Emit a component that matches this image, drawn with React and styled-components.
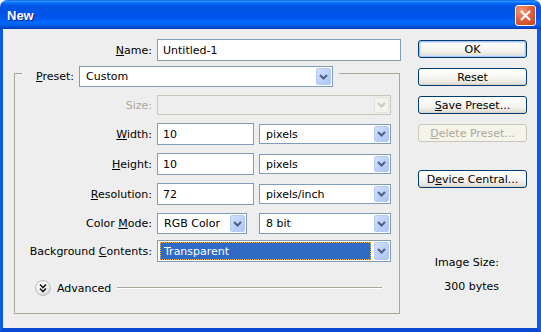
import React from "react";
import styled, { createGlobalStyle } from "styled-components";

const GlobalStyle = createGlobalStyle`
    html, body {
        margin: 0;
        padding: 0;
        background: #ffffff;
    }
    body {
        font-family: "DejaVu Sans", Verdana, sans-serif;
        font-size: 11px;
        color: #000;
    }
`;

const Window = styled.div`
    width: 541px;
    height: 332px;
    display: flex;
    flex-direction: column;
`;

const TitleBar = styled.div`
    height: 29px;
    flex: none;
    box-sizing: border-box;
    display: flex;
    align-items: center;
    justify-content: space-between;
    padding: 2px 5px 0 7px;
    border-radius: 7px 7px 0 0;
    background: linear-gradient(
        to bottom,
        #0058ee 0%,
        #3593ff 4%,
        #288eff 6%,
        #127dff 8%,
        #036ffc 10%,
        #0262ee 14%,
        #0057e5 20%,
        #0054e3 24%,
        #0055eb 56%,
        #005bf5 66%,
        #026afe 76%,
        #0062ef 86%,
        #0052d6 92%,
        #0046c4 96%,
        #003fb8 100%
    );
`;

const Title = styled.span`
    color: #fff;
    font-family: "Liberation Sans", Arial, sans-serif;
    font-weight: bold;
    font-size: 13px;
    text-shadow: 1px 1px 0 #0a1883;
`;

const CloseButton = styled.div`
    width: 21px;
    height: 21px;
    box-sizing: border-box;
    border: 1px solid #fff;
    border-radius: 3px;
    background: radial-gradient(circle at 30% 25%, #f29d80 0%, #e2623c 45%, #c8421c 100%);
    display: flex;
    align-items: center;
    justify-content: center;
`;

const Client = styled.div`
    flex: 1;
    display: flex;
    background: #eeeeee;
    border-left: 3px solid #0b5be6;
    border-right: 4px solid #0b5be6;
    border-bottom: 4px solid #0a48d2;
    padding: 10px 10px 0 11px;
`;

const FormColumn = styled.div`
    width: 387px;
    display: flex;
    flex-direction: column;
`;

const NameRow = styled.div`
    display: grid;
    grid-template-columns: 138px 244px;
    column-gap: 5px;
    align-items: center;
`;

const Label = styled.span`
    text-align: right;
    white-space: nowrap;
    color: ${(p) => (p.$disabled ? "#aca899" : "#000")};
`;

const Key = styled.u`
    text-decoration: underline;
    text-underline-offset: 1px;
`;

const TextInput = styled.input`
    box-sizing: border-box;
    width: ${(p) => p.$width}px;
    height: 22px;
    margin: 0;
    padding: 0 0 0 5px;
    border: 1px solid #7f9db9;
    background: #fff;
    font-family: "DejaVu Sans", Verdana, sans-serif;
    font-size: 11px;
    color: #000;
    outline: none;
`;

const SelectBox = styled.div`
    box-sizing: border-box;
    display: flex;
    width: ${(p) => (p.$width ? `${p.$width}px` : "100%")};
    height: ${(p) => p.$height || 21}px;
    border: 1px solid ${(p) => (p.$disabled ? "#c9c7ba" : "#7f9db9")};
    background: ${(p) => (p.$disabled ? "#eeeeee" : "#fff")};
`;

const SelectValue = styled.div`
    flex: 1;
    display: flex;
    align-items: center;
    padding-left: 6px;
    white-space: nowrap;
    overflow: hidden;
`;

const SelectedValue = styled.div`
    flex: 1;
    display: flex;
    align-items: center;
    margin: 1px 2px 1px 2px;
    padding-left: 4px;
    background: #316ac5;
    color: #fff;
    outline: 1px dotted #e8b84a;
    outline-offset: -1px;
`;

const ArrowBox = styled.div`
    width: 15px;
    margin: 1px;
    box-sizing: border-box;
    border-radius: 2px;
    border: 1px solid ${(p) => (p.$disabled ? "#e4e3dc" : "#b7caf5")};
    background: ${(p) =>
        p.$disabled
            ? "#f3f3f0"
            : "linear-gradient(135deg, #d6e2fd 0%, #bed1fa 50%, #adc4f4 100%)"};
    display: flex;
    align-items: center;
    justify-content: center;
`;

const Group = styled.fieldset`
    margin: -2px 0 0 0;
    width: 386px;
    min-width: 0;
    box-sizing: border-box;
    padding: 8px 8px 17px 0;
    border: 1px solid #aca899;
    border-radius: 0;
`;

const Legend = styled.legend`
    margin-left: 7px;
    padding: 7px 6px 0 14px;
`;

const LegendInner = styled.div`
    display: flex;
    align-items: center;
    gap: 5px;
`;

const FieldRow = styled.div`
    display: grid;
    grid-template-columns: 137px 234px;
    column-gap: 5px;
    align-items: center;
    margin-top: ${(p) => (p.$mt === undefined ? 8 : p.$mt)}px;
`;

const Controls = styled.div`
    display: flex;
    align-items: center;
    justify-content: space-between;
`;

const AdvancedRow = styled.div`
    display: flex;
    align-items: center;
    height: 16px;
    margin: 18px 9px 0 20px;
`;

const AdvancedText = styled.span`
    margin-left: 6px;
`;

const Rule = styled.div`
    flex: 1;
    margin-left: 6px;
    border-top: 1px solid #aca899;
    border-bottom: 1px solid #ffffff;
`;

const SideColumn = styled.div`
    width: 109px;
    margin-left: 17px;
    padding-top: 1px;
    display: flex;
    flex-direction: column;
`;

const Button = styled.div`
    box-sizing: border-box;
    width: 109px;
    height: 18px;
    margin-top: ${(p) => p.$mt || 0}px;
    display: flex;
    align-items: center;
    justify-content: center;
    border: 1px solid ${(p) => (p.$disabled ? "#c9c7ba" : "#003c74")};
    border-radius: 3px;
    color: ${(p) => (p.$disabled ? "#aca899" : "#000")};
    background: ${(p) =>
        p.$disabled
            ? "#f5f4ea"
            : "linear-gradient(to bottom, #ffffff 0%, #f4f3ee 60%, #e6e3da 88%, #d6d0c5 100%)"};
    box-shadow: ${(p) =>
        p.$default ? "inset 0 0 0 1px #a9c4f0, inset 0 0 0 2px #d4e3fb" : "none"};
    white-space: nowrap;
`;

const ImageInfo = styled.div`
    align-self: flex-end;
    margin: 68px 28px 0 0;
    text-align: right;
    line-height: 14px;
`;

const InfoLine = styled.div`
    margin-top: ${(p) => p.$mt || 0}px;
`;

const Chevron = ({ disabled }) => (
    <svg width="9" height="6" viewBox="0 0 9 6">
        <path
            d="M1 1 L4.5 4.5 L8 1"
            fill="none"
            stroke={disabled ? "#c9c7ba" : "#4d6185"}
            strokeWidth="2"
        />
    </svg>
);

const Select = ({ value, width, height, disabled, selected }) => (
    <SelectBox $width={width} $height={height} $disabled={disabled}>
        {selected ? <SelectedValue>{value}</SelectedValue> : <SelectValue>{value}</SelectValue>}
        <ArrowBox $disabled={disabled}>
            <Chevron disabled={disabled} />
        </ArrowBox>
    </SelectBox>
);

const AdvancedIcon = () => (
    <svg width="16" height="16" viewBox="0 0 16 16">
        <defs>
            <radialGradient id="adv" cx="40%" cy="35%" r="70%">
                <stop offset="0%" stopColor="#ffffff" />
                <stop offset="70%" stopColor="#eaeaea" />
                <stop offset="100%" stopColor="#c8c8c8" />
            </radialGradient>
        </defs>
        <circle cx="8" cy="8" r="7.5" fill="url(#adv)" stroke="#c0c0c0" />
        <path d="M5 4.5 L8 7.5 L11 4.5" fill="none" stroke="#1a1a1a" strokeWidth="1.6" />
        <path d="M5 8.5 L8 11.5 L11 8.5" fill="none" stroke="#1a1a1a" strokeWidth="1.6" />
    </svg>
);

const App = () => {
    return (
        <Window>
            <GlobalStyle />
            <TitleBar>
                <Title>New</Title>
                <CloseButton>
                    <svg width="13" height="13" viewBox="0 0 13 13">
                        <path d="M2 2 L11 11 M11 2 L2 11" stroke="#fff" strokeWidth="2.2" />
                    </svg>
                </CloseButton>
            </TitleBar>
            <Client>
                <FormColumn>
                    <NameRow>
                        <Label>
                            <Key>N</Key>ame:
                        </Label>
                        <TextInput $width={244} defaultValue="Untitled-1" readOnly />
                    </NameRow>
                    <Group>
                        <Legend>
                            <LegendInner>
                                <Label>
                                    <Key>P</Key>reset:
                                </Label>
                                <Select value="Custom" width={254} />
                            </LegendInner>
                        </Legend>
                        <FieldRow $mt={0}>
                            <Label $disabled>Size:</Label>
                            <Select value="" height={20} disabled />
                        </FieldRow>
                        <FieldRow>
                            <Label>
                                <Key>W</Key>idth:
                            </Label>
                            <Controls>
                                <TextInput $width={97} defaultValue="10" readOnly />
                                <Select value="pixels" width={132} height={20} />
                            </Controls>
                        </FieldRow>
                        <FieldRow>
                            <Label>
                                <Key>H</Key>eight:
                            </Label>
                            <Controls>
                                <TextInput $width={97} defaultValue="10" readOnly />
                                <Select value="pixels" width={132} height={20} />
                            </Controls>
                        </FieldRow>
                        <FieldRow>
                            <Label>
                                <Key>R</Key>esolution:
                            </Label>
                            <Controls>
                                <TextInput $width={97} defaultValue="72" readOnly />
                                <Select value="pixels/inch" width={132} height={20} />
                            </Controls>
                        </FieldRow>
                        <FieldRow>
                            <Label>
                                Color <Key>M</Key>ode:
                            </Label>
                            <Controls>
                                <Select value="RGB Color" width={90} />
                                <Select value="8 bit" width={132} />
                            </Controls>
                        </FieldRow>
                        <FieldRow $mt={6}>
                            <Label>
                                Background <Key>C</Key>ontents:
                            </Label>
                            <Select value="Transparent" height={22} selected />
                        </FieldRow>
                        <AdvancedRow>
                            <AdvancedIcon />
                            <AdvancedText>Advanced</AdvancedText>
                            <Rule />
                        </AdvancedRow>
                    </Group>
                </FormColumn>
                <SideColumn>
                    <Button $default>OK</Button>
                    <Button $mt={10}>Reset</Button>
                    <Button $mt={10}>
                        <Key>S</Key>ave Preset...
                    </Button>
                    <Button $mt={10} $disabled>
                        <Key>D</Key>elete Preset...
                    </Button>
                    <Button $mt={28}>
                        D<Key>e</Key>vice Central...
                    </Button>
                    <ImageInfo>
                        <InfoLine>Image Size:</InfoLine>
                        <InfoLine $mt={10}>300 bytes</InfoLine>
                    </ImageInfo>
                </SideColumn>
            </Client>
        </Window>
    );
};

export default App;
